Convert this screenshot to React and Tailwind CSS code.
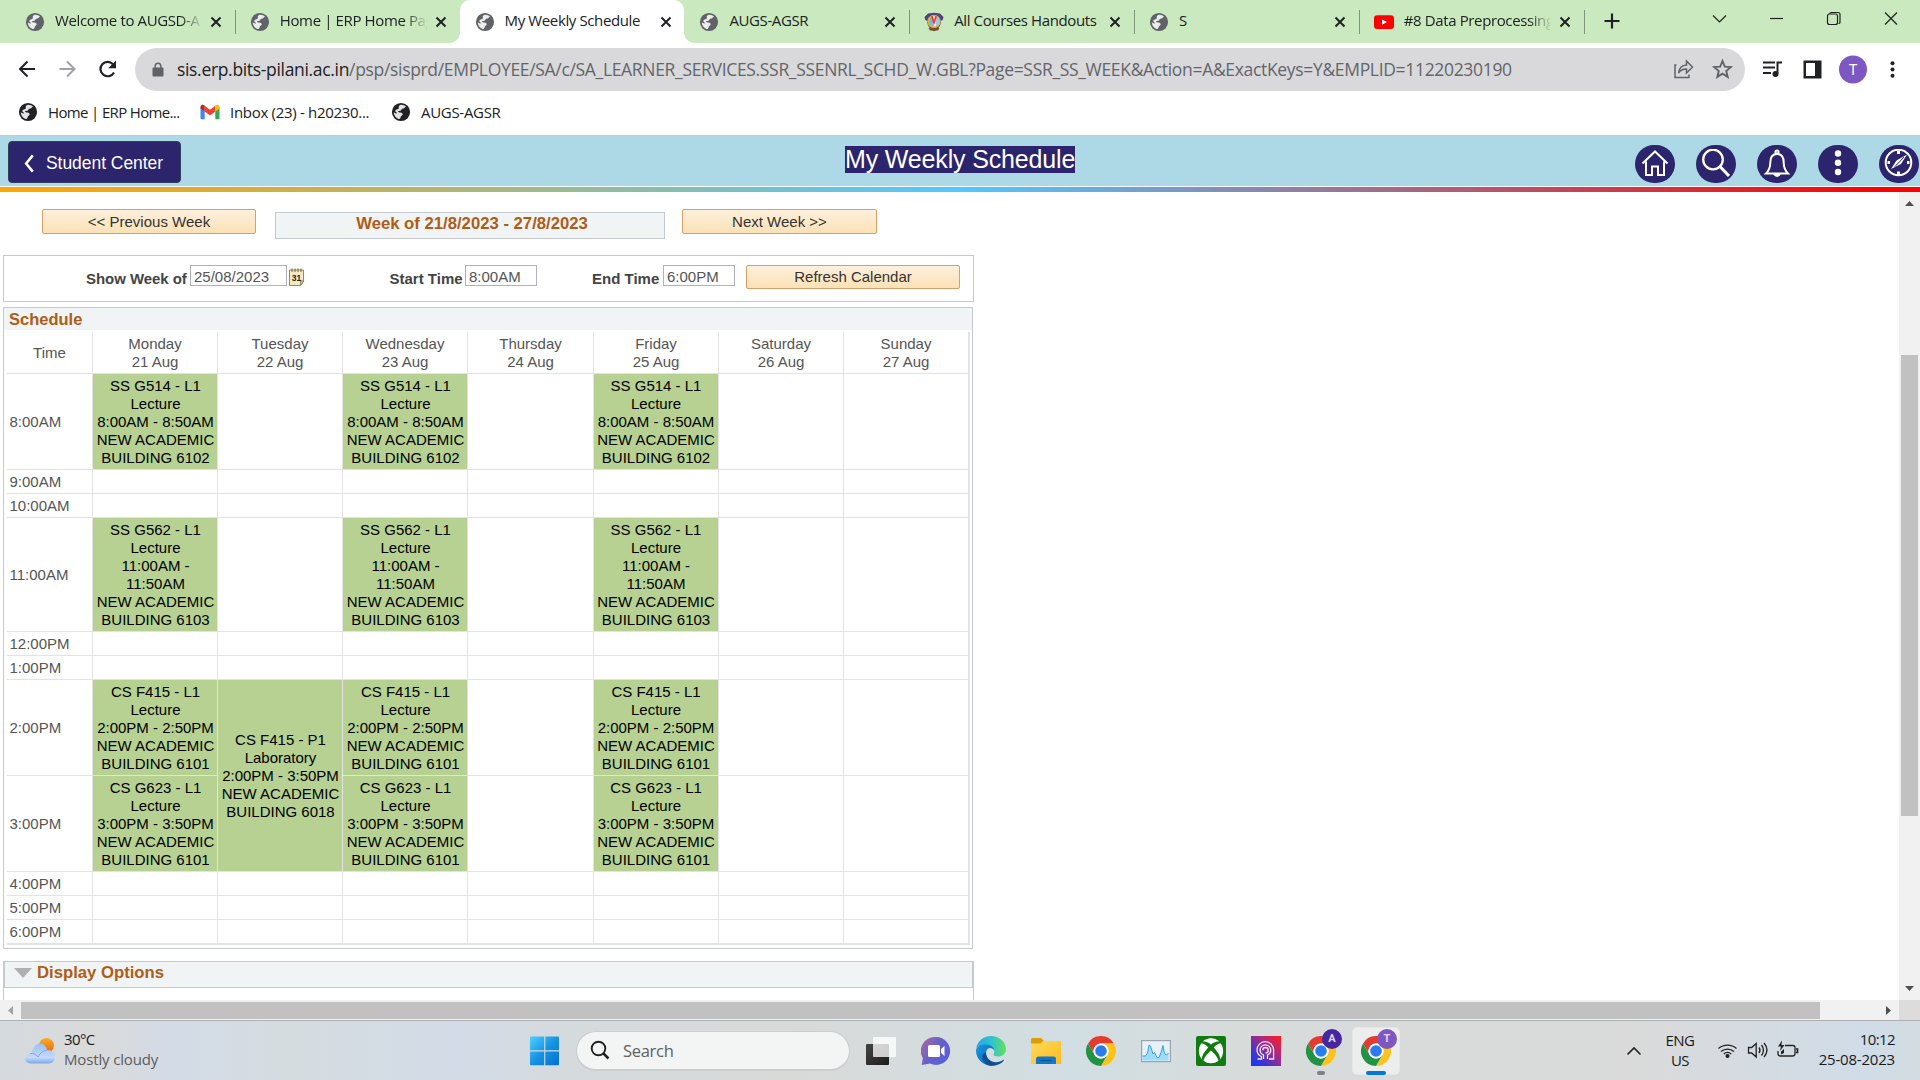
import React from "react";

const UI = "font-['Open_Sans','Noto_Sans',sans-serif]";
const ARIAL = "font-['Liberation_Sans',Arial,sans-serif]";

function Globe({ color = "#5f6368" }) {
  return (
    <svg viewBox="0 0 20 20" className="size-5 shrink-0">
      <circle cx="10" cy="10" r="9.1" fill={color} />
      <path d="M9.300 2.900c2.300-.3 4.300.4 5.700 1.800-.6.5-1.200.7-1.700 1.300-.6.8-1.500.5-2.400.9-1 .5-.4 1.500-1.400 1.900-.8.300-1.700-.1-2.300.5-.5.600.300 1.200 1.300 1.200 1.300 0 2.700.2 3.100 1.300.4 1.200-.5 1.700-1.300 2.200-.8.600-.5 1.800-1.200 2.400-.5.400-1 .6-1.600.6C5 16 2.800 13.500 2.700 10.200c1 .7 2.200 1.300 3.300 1.400.1-.9-.8-1.300-1.400-1.900-.5-.6-.2-1.700.5-2 .9-.4 2-.2 2.600-1.100.4-.7-.2-1.400.1-2.200.2-.7.700-1.300 1.500-1.500z" fill="#fff" fillOpacity=".88" />
    </svg>
  );
}

function Crest() {
  return (
    <svg viewBox="0 0 20 20" className="size-5 shrink-0">
      <path d="M.5 5 4 1.500 10 .8l6 .7L19.500 5l-.8 3-1.700.8C17 14 14 17.500 10 19.200 6 17.500 3.500 14 3 8.800L1.300 8z" fill="#4a4380" />
      <circle cx="10" cy="9.500" r="6.800" fill="#d8aa2c" />
      <circle cx="10" cy="9.300" r="5.300" fill="#f7efe0" />
      <path d="M4.900 9a5 5 0 0 1 3-4.400L10 14.500 8 14a5 5 0 0 1-3.100-5z" fill="#7fb5dd" />
      <path d="M12 4.500a5 5 0 0 1 0 9.800z" fill="#9cc9dc" />
      <path d="m7 4.500 3 8.500 3-8.500-1.800-.4L10 8.500 8.800 4.100z" fill="#e5352b" />
      <path d="M4.500 16h11L14 18.500H6z" fill="#7d4f28" />
    </svg>
  );
}

function YouTube() {
  return (
    <svg viewBox="0 0 20 20" className="size-5 shrink-0">
      <rect x="0" y="3.300" width="20" height="13.600" rx="3" fill="#f00" />
      <path d="m8 7.400 5 2.700-5 2.700z" fill="#fff" />
    </svg>
  );
}

function Gmail() {
  return (
    <svg viewBox="0 0 20 16" className="h-4 w-5 shrink-0">
      <path d="M.5 3v11.200c0 .6.500 1 1 1h3.200V7.300z" fill="#4285f4" />
      <path d="M19.500 3v11.200c0 .6-.5 1-1 1h-3.200V7.300z" fill="#34a853" />
      <path d="M4.700 7.600V1.700L10 5.700l5.300-4v5.900L10 11.600z" fill="#ea4335" />
      <path d="M.5 3C.5 1 2.800.1 4.300 1.300l.4.400v5.900L.5 4.500z" fill="#c5221f" />
      <path d="M19.500 3c0-2-2.300-2.900-3.800-1.700l-.4.400v5.900l4.200-3.100z" fill="#fbbc04" />
    </svg>
  );
}

function Cross() {
  return (
    <svg viewBox="0 0 12 12" className="size-3 shrink-0">
      <path d="m1.500 1.500 9 9m0-9-9 9" stroke="#202124" strokeWidth="2" />
    </svg>
  );
}

const tabs = [
  { title: "Welcome to AUGSD-A", icon: "globe", sep: true, fade: true },
  { title: "Home | ERP Home Pag", icon: "globe", fade: true },
  { title: "My Weekly Schedule", icon: "globe", active: true },
  { title: "AUGS-AGSR", icon: "globe", sep: true },
  { title: "All Courses Handouts", icon: "crest", sep: true },
  { title: "S", icon: "globe", sep: true },
  { title: "#8 Data Preprocessing", icon: "yt", sep: true, fade: true },
];

function Tab({ t }) {
  return (
    <div className={"relative flex h-[43px] w-[224.8px] shrink-0 items-center pl-[15px] " + (t.active ? "rounded-t-[10px] bg-white" : "")}>
      {t.icon === "globe" ? <Globe /> : t.icon === "crest" ? <Crest /> : <YouTube />}
      <span
        className={
          "mb-[3px] ml-[10px] w-[147px] overflow-hidden whitespace-nowrap text-[15px] leading-[22px] tracking-[-0.38px] text-[#202124] " +
          (t.fade ? "[mask-image:linear-gradient(to_right,#000_125px,transparent_148px)]" : "")
        }
      >
        {t.title}
      </span>
      <span className="ml-[8px] flex"><Cross /></span>
      {t.sep && <span className="absolute right-[-1px] top-[10px] h-[24px] w-px bg-[#7f957a]" />}
      {t.active && (
        <>
          <span className="absolute bottom-0 left-[-10px] size-[10px] bg-[radial-gradient(circle_at_0_0,transparent_9.500px,#fff_10px)]" />
          <span className="absolute bottom-0 right-[-10px] size-[10px] bg-[radial-gradient(circle_at_100%_0,transparent_9.500px,#fff_10px)]" />
        </>
      )}
    </div>
  );
}

function TabBar() {
  return (
    <div className="flex h-[43px] shrink-0 bg-[#cae9be] pl-[10px]">
      {tabs.map((t) => <Tab key={t.title} t={t} />)}
      <svg viewBox="0 0 16 16" className="ml-[20px] mt-[13px] size-4"><path d="M8 .5v15M.5 8h15" stroke="#202124" strokeWidth="2.200" /></svg>
      <svg viewBox="0 0 220 43" className="ml-auto h-[43px] w-[220px]" fill="none" stroke="#222" strokeWidth="1.200">
        <path d="m13 15.500 6.500 6.500 6.500-6.500" />
        <path d="M70 18.500h13" />
        <rect x="127.500" y="14" width="10" height="10.500" rx="2" />
        <path d="M130 14v-.5q0-1 1-1h7q2 0 2 2v8q0 1-1.500 1" />
        <path d="m185 12.500 12 12m0-12-12 12" />
      </svg>
    </div>
  );
}

function Toolbar() {
  return (
    <div className="flex h-[53px] shrink-0 items-center bg-white">
      <svg viewBox="0 0 120 48" className="mb-[2px] h-12 w-[120px] shrink-0" fill="none" strokeWidth="2">
        <path d="M35 24H20.500m7-7.500L20 24l7.500 7.500" stroke="#202124" />
        <path d="M59.500 24H74m-7-7.500 7.500 7.500-7.500 7.500" stroke="#a0a2a5" />
        <path d="M114 27.500a7.200 7.200 0 1 1-1-8.300" stroke="#202124" strokeWidth="2.200" />
        <path d="M116 15.500v7.800h-7.800z" fill="#202124" />
      </svg>
      <div className="ml-[15px] flex h-[43px] w-[1610px] shrink-0 items-center rounded-full bg-[#d9d9db] pl-[17px]">
        <svg viewBox="0 0 12 16" className="h-4 w-3 shrink-0">
          <path d="M1.500 5.500h9q1 0 1 1v7q0 1-1 1h-9q-1 0-1-1v-7q0-1 1-1z" fill="#5f6368" />
          <path d="M3.200 6V4a2.800 2.800 0 0 1 5.600 0v2" fill="none" stroke="#5f6368" strokeWidth="1.500" />
        </svg>
        <span className="mb-[2px] ml-[13px] whitespace-nowrap text-[17.500px] leading-[24px] tracking-[-0.325px] text-[#63656a]">
          <span className="text-[#202124]">sis.erp.bits-pilani.ac.in</span>/psp/sisprd/EMPLOYEE/SA/c/SA_LEARNER_SERVICES.SSR_SSENRL_SCHD_W.GBL?Page=SSR_SS_WEEK&amp;Action=A&amp;ExactKeys=Y&amp;EMPLID=11220230190
        </span>
        <svg viewBox="0 0 70 24" className="mb-[2px] ml-auto mr-[5px] h-6 w-[70px] shrink-0" fill="none" stroke="#5f6368" strokeWidth="1.500">
          <path d="M6.500 8H5v12.500h14v-3" />
          <path d="M8.500 16c.7-5 3.500-7.700 8-8V4l6 6-6 6v-4c-3.500 0-6 1.200-8 4z" />
          <path d="m52.500 4 2.300 5.600 6 .5-4.600 3.900 1.500 5.900-5.200-3.200-5.200 3.200 1.500-5.900-4.600-3.900 6-.5z" strokeWidth="1.900" />
        </svg>
      </div>
      <svg viewBox="0 0 160 48" className="mb-[2px] ml-[15px] h-12 w-[160px] shrink-0">
        <path d="M3 17.500h12M3 22.500h12M3 28h8" stroke="#202124" strokeWidth="2" />
        <path d="M22 17.500h-4.500v11" fill="none" stroke="#202124" strokeWidth="2" />
        <circle cx="15.500" cy="29" r="3" fill="#202124" />
        <path d="M43.500 15.500h18v18h-18z" fill="#202124" />
        <path d="M46 18h9v13h-9z" fill="#fff" />
        <circle cx="93" cy="24.500" r="14" fill="#7e57c2" />
        <text x="93" y="29.700" textAnchor="middle" fontSize="14.500" fill="#fff" fontFamily="Roboto">T</text>
        <g fill="#202124"><circle cx="132.500" cy="18.300" r="2" /><circle cx="132.500" cy="24.500" r="2" /><circle cx="132.500" cy="30.700" r="2" /></g>
      </svg>
    </div>
  );
}

function Bookmarks() {
  return (
    <div className="flex h-[40px] shrink-0 items-center border-b border-[#c8cacc] bg-white pb-[7px] text-[15px] tracking-[-0.3px] text-[#202124]">
      <div className="flex w-[182px] items-center gap-[10px] pl-[18px]"><Globe color="#202124" /><span className="whitespace-nowrap tracking-[-0.65px]">Home | ERP Home...</span></div>
      <div className="flex w-[190px] items-center gap-[10px] pl-[18px]"><Gmail /><span className="whitespace-nowrap">Inbox (23) - h20230...</span></div>
      <div className="flex items-center gap-[10px] pl-[19px]"><Globe color="#202124" /><span>AUGS-AGSR</span></div>
    </div>
  );
}

function RoundIcon({ children }) {
  return (
    <span className="flex h-[38px] w-[40px] items-center justify-center rounded-full bg-[#2c246c]">
      <svg viewBox="0 0 30 30" className="size-[30px]" fill="none" stroke="#fff" strokeWidth="2">{children}</svg>
    </span>
  );
}

function PageHeader() {
  return (
    <>
      <div className={"grid h-[50px] shrink-0 grid-cols-[835px_250px_1fr] bg-[#add8e6] " + ARIAL}>
        <div className="flex pl-2 pt-[5px]">
          <div className="flex h-[42px] w-[173px] items-center rounded-[4px] border border-[#2f3f5c] bg-[#2c246c] pl-[14px] pt-[2px] text-[17.500px] text-white">
            <svg viewBox="0 0 12 20" className="mr-[11px] h-[19px] w-3 shrink-0"><path d="M10 1.500 3 10l7 8.500" fill="none" stroke="#fff" strokeWidth="2.700" /></svg>
            <span className="whitespace-nowrap tracking-[-0.05px]">Student Center</span>
          </div>
        </div>
        <div className="flex justify-center pt-[10px]">
          <h1 className="h-[27px] w-[230px] whitespace-nowrap bg-[#2c246c] text-center text-[25px] leading-[26px] tracking-[-0.15px] text-white">My Weekly Schedule</h1>
        </div>
        <div className="flex justify-end gap-[21px] pr-[1px] pt-[9px]">
          <RoundIcon><path d="M2.500 14.500 15 2.500l12.500 12M6 12.500V26h6v-8.500h6V26h6V12.500" /></RoundIcon>
          <RoundIcon><circle cx="12" cy="10.500" r="9.800" strokeWidth="2.300" /><path d="m19 17.500 9 9.500" strokeWidth="3" /></RoundIcon>
          <RoundIcon><path d="M4 24.500h22c-3.500-3.500-4.300-6-4.300-11 0-5.500-2.500-8.500-6.700-8.500s-6.700 3-6.700 8.500c0 5-.8 7.500-4.300 11z" /><path d="M12 25q3 4 6 0" fill="#fff" /><circle cx="15" cy="3" r="1.600" /></RoundIcon>
          <RoundIcon><g fill="#fff" stroke="none"><circle cx="15" cy="4.500" r="3.200" /><circle cx="15" cy="13.800" r="3.200" /><circle cx="15" cy="23" r="3.200" /></g></RoundIcon>
          <RoundIcon><circle cx="14.500" cy="13.500" r="12.800" /><path d="m7 20 5.500-8.500L23 5.500l-6 9.500z" fill="#fff" stroke="none" /><path d="M11 17.500 20 8" stroke="#2c246c" strokeWidth="1" /><path d="M14.500 2v3M14.500 22.500v3M3.500 13.500h2.500M23 13.500h2.500" strokeWidth="3" /></RoundIcon>
        </div>
      </div>
      <div className="h-px shrink-0 bg-[#f4f8fa]" />
      <div className="h-[5px] shrink-0 bg-[linear-gradient(to_right,#ffa500_0px,#ffa500_20px,#50c8ff_960px,#ff0000_1890px)]" />
    </>
  );
}

function PeachButton({ className, children }) {
  return (
    <button className={"flex items-center justify-center whitespace-nowrap rounded-[2px] border border-[#d8a067] bg-gradient-to-b from-[#fdf0dc] to-[#fbe1b6] text-[15px] text-[#333] " + className}>
      {children}
    </button>
  );
}

function Field({ className, children }) {
  return <span className={"flex h-[21px] items-center border border-[#b0b3b8] bg-white pl-[3px] pt-[2px] text-[15px] leading-[17px] text-[#555] " + className}>{children}</span>;
}

function CalendarIcon() {
  return (
    <svg viewBox="0 0 16 18" className="ml-[2px] mt-[12px] h-[18px] w-4 shrink-0">
      <path d="M.5 2h14v11l-3 4.500H.5z" fill="#f4e8c4" stroke="#9a8758" />
      <path d="m15 13-3.500 4.500V13z" fill="#cdb87d" stroke="#8d7a4b" strokeWidth=".7" />
      <path d="M3 .5V4M6 .5V4M9 .5V4M12 .5V4" stroke="#77694a" />
      <text x="7.600" y="12.500" textAnchor="middle" fontSize="8.500" fontWeight="700" fontFamily="Liberation Sans" fill="#222">31</text>
    </svg>
  );
}

const days = [["Monday", "21 Aug"], ["Tuesday", "22 Aug"], ["Wednesday", "23 Aug"], ["Thursday", "24 Aug"], ["Friday", "25 Aug"], ["Saturday", "26 Aug"], ["Sunday", "27 Aug"]];

const lec = (code, time, room) => [code + " - L1", "Lecture", ...time, "NEW ACADEMIC", "BUILDING " + room];
const rows = [
  { time: "8:00AM", mwf: lec("SS G514", ["8:00AM - 8:50AM"], "6102") },
  { time: "9:00AM" },
  { time: "10:00AM" },
  { time: "11:00AM", mwf: lec("SS G562", ["11:00AM -", "11:50AM"], "6103") },
  { time: "12:00PM" },
  { time: "1:00PM" },
  { time: "2:00PM", mwf: lec("CS F415", ["2:00PM - 2:50PM"], "6101"), tue: ["CS F415 - P1", "Laboratory", "2:00PM - 3:50PM", "NEW ACADEMIC", "BUILDING 6018"] },
  { time: "3:00PM", mwf: lec("CS G623", ["3:00PM - 3:50PM"], "6101"), skipTue: true },
  { time: "4:00PM" },
  { time: "5:00PM" },
  { time: "6:00PM" },
];

function Slot({ lines, span, nudge }) {
  const base = "flex flex-col items-center justify-center border-b border-r border-[#e3e3e3] whitespace-nowrap ";
  return (
    <div className={base + (span ? "row-span-2 " : "") + (nudge ? "pl-px " : "") + (lines ? "bg-[#b6d191] text-black" : "")}>
      {lines && lines.map((l) => <div key={l}>{l}</div>)}
    </div>
  );
}

function Schedule() {
  return (
    <section className="ml-[3px] mt-[5px] h-[642px] w-[970px] border border-[#c5c9d0]">
      <h2 className="h-[22px] bg-[#f0f4f5] pl-[5px] text-[16.500px] font-bold leading-[22px] text-[#b05c17]">Schedule</h2>
      <div className="ml-[3px] mt-[2px] grid w-[963px] grid-cols-[86px_125px_125px_125px_126px_125px_125px_125px] grid-rows-[42px_96px_24px_24px_114px_24px_24px_96px_96px_24px_24px_24px] border-b border-r border-[#e3e3e3] text-[15px] leading-[18px] text-[#555]">
        <div className="flex items-center justify-center border-b border-r border-[#e3e3e3]">Time</div>
        {days.map(([d, n]) => (
          <div key={d} className="flex flex-col items-center justify-center border-b border-r border-[#e3e3e3] pt-px">
            <div>{d}</div>
            <div>{n}</div>
          </div>
        ))}
        {rows.map((r) => (
          <React.Fragment key={r.time}>
            <div className="flex items-center border-b border-r border-[#e3e3e3] pl-[2.500px]">{r.time}</div>
            <Slot lines={r.mwf} nudge />
            {!r.skipTue && <Slot lines={r.tue} span={!!r.tue} nudge />}
            <Slot lines={r.mwf} nudge />
            <Slot />
            <Slot lines={r.mwf} />
            <Slot />
            <Slot />
          </React.Fragment>
        ))}
      </div>
    </section>
  );
}

function Content() {
  return (
    <main className={"h-[808px] flex-1 overflow-hidden bg-white " + ARIAL}>
      <div className="flex items-start pl-[42px] pt-[17px]">
        <PeachButton className="h-[25px] w-[214px] pt-[2px]">&lt;&lt; Previous Week</PeachButton>
        <div className="ml-[19px] mt-[3px] h-[27px] w-[390px] whitespace-nowrap border border-[#c5c9d0] bg-[#f0f4f5] pl-[4px] text-center text-[16.700px] font-bold leading-[22px] text-[#b05c17]">Week of 21/8/2023 - 27/8/2023</div>
        <PeachButton className="ml-[17px] h-[25px] w-[195px] pt-[2px]">Next Week &gt;&gt;</PeachButton>
      </div>
      <div className="ml-[3px] mt-[16px] flex h-[47px] w-[971px] items-start border border-[#c5c9d0] text-[15px]">
        <b className="ml-[82px] mt-[14px] w-[104px] whitespace-nowrap leading-[18px] tracking-[-0.05px] text-[#444]">Show Week of</b>
        <Field className="mt-[9px] w-[97px]">25/08/2023</Field>
        <CalendarIcon />
        <b className="ml-[84.500px] mt-[14px] w-[75.500px] whitespace-nowrap leading-[18px] text-[#444]">Start Time</b>
        <Field className="mt-[9px] w-[72px]">8:00AM</Field>
        <b className="ml-[55px] mt-[14px] w-[71px] whitespace-nowrap leading-[18px] text-[#444]">End Time</b>
        <Field className="mt-[9px] w-[72px]">6:00PM</Field>
        <PeachButton className="ml-[11px] mt-[9px] h-[24px] w-[214px]">Refresh Calendar</PeachButton>
      </div>
      <Schedule />
      <section className="ml-[3px] mt-[12px] h-[60px] w-[971px] border border-[#c5c9d0]">
        <h2 className="flex h-[26px] items-center border-b border-r border-l border-[#c5c9d0] bg-[#f0f4f5] pl-[9px] text-[16.700px] font-bold text-[#b05c17]">
          <svg viewBox="0 0 18 10" className="mr-[5px] mb-[3px] h-[10px] w-[18px]"><path d="M0 0h18L9 10z" fill="#aeb0b2" /></svg>
          <span className="mb-[3px]">Display Options</span>
        </h2>
      </section>
    </main>
  );
}

function Chrome() {
  return (
    <svg viewBox="0 0 48 48" className="size-[30px]">
      <circle cx="24" cy="24" r="24" fill="#fff" />
      <path d="M3.200 12A24 24 0 0 1 44.800 12H24a12 12 0 0 0-10.400 18z" fill="#e33b2e" />
      <path d="M44.800 12A24 24 0 0 1 24 48l10.400-18A12 12 0 0 0 24 12z" fill="#fcc31e" />
      <path d="M24 48A24 24 0 0 1 3.200 12l10.400 18a12 12 0 0 0 20.800 0z" fill="#229342" />
      <circle cx="24" cy="24" r="12" fill="#fff" />
      <circle cx="24" cy="24" r="9.300" fill="#2a7bf0" />
    </svg>
  );
}

function Badge({ letter, color }) {
  return <span className={"absolute left-[16px] top-[-7px] flex size-[20px] items-center justify-center rounded-full font-['Roboto',sans-serif] text-[11px] font-bold text-[#e0d8f2] " + color}>{letter}</span>;
}

function TaskApps() {
  return (
    <div className="ml-[16px] flex items-center gap-[25px]">
      <svg viewBox="0 0 30 30" className="size-[30px]">
        <defs><linearGradient id="tv" x2="1" y2="1"><stop stopColor="#444" /><stop offset="1" stopColor="#1d1d1d" /></linearGradient></defs>
        <rect x="0" y="8" width="23" height="21" rx="1" fill="url(#tv)" />
        <rect x="7" y="1" width="23" height="20" rx="1" fill="#fff" fillOpacity=".78" />
      </svg>
      <svg viewBox="0 0 30 30" className="size-[30px]">
        <defs><linearGradient id="tm" x1=".1" y1=".2" x2=".9" y2=".7"><stop stopColor="#9a67ad" /><stop offset=".5" stopColor="#6660c8" /><stop offset="1" stopColor="#5a5fd6" /></linearGradient></defs>
        <path d="M15 1a14 14 0 1 1-6 26.600L.8 29l1-7A14 14 0 0 1 15 1z" fill="url(#tm)" />
        <rect x="7" y="9" width="12" height="12" rx="1.500" fill="#fff" />
        <path d="m20 13 3.500-3v10L20 17z" fill="#fff" />
      </svg>
      <svg viewBox="0 0 30 30" className="size-[30px]">
        <defs>
          <linearGradient id="e1" x2="1"><stop stopColor="#2aa5e8" /><stop offset=".5" stopColor="#2cc3d2" /><stop offset="1" stopColor="#66e05a" /></linearGradient>
          <linearGradient id="e2" x2="1" y2="1"><stop stopColor="#1c95e0" /><stop offset="1" stopColor="#0a62b5" /></linearGradient>
        </defs>
        <path d="M.3 12C1.500 5 7.500 0 15 0c8.300 0 15 6 15 13 0 5-3.700 7.500-7.500 7.500-3 0-5-1-5-2 0-.8 1-1.300 1-3.500 0-3-3-5.500-7-5.500C7 9.500 2.500 10 .3 12z" fill="url(#e1)" />
        <path d="M0 15C0 11 4 8.500 9.500 8.500c5 0 9 2.500 9 6.500-1-2.500-3.500-3.500-5-3-2.500.8-3.500 3-3.500 5.500 0 5 3.500 9 8 11.800A15 15 0 0 1 0 15z" fill="url(#e2)" />
        <path d="M10 16.500c0 6 5 9.700 10 9.700 3 0 5.500-1 7-2.200.7-.4 1.200.1.700.8C25 28 20.500 30 15.500 30c-6-1-10-6-9-10.500.4-1.500 1.800-2.700 3.500-3z" fill="#114f93" />
      </svg>
      <svg viewBox="0 0 30 30" className="size-[30px]">
        <path d="M0 3.500Q0 2 1.500 2H10l3 3v4H0z" fill="#dd9a09" />
        <defs><linearGradient id="fo" x2="1" y2="1"><stop stopColor="#ffdb5c" /><stop offset="1" stopColor="#fdbb1b" /></linearGradient></defs>
        <path d="M0 7.500h9.500l2.500-2.500h18v23H0z" fill="url(#fo)" />
        <path d="M5 28v-5q0-2.500 2.500-2.500h15Q25 20.500 25 23v5z" fill="#0f78cb" />
        <path d="M9.500 24.500h11" stroke="#07518f" strokeWidth="1.200" />
      </svg>
      <Chrome />
      <svg viewBox="0 0 30 30" className="size-[30px]">
        <rect x=".6" y="4.600" width="28.800" height="21" fill="#e8f1f8" stroke="#98a3ad" strokeWidth="1.200" />
        <path d="M1.500 20h3l2-3 1.500-8 1.500 1 2.500 8 1.500-1.500 2.500 5h2l2-5 2-7 1.500 8 2 1.500 2-2V24.500h-26z" fill="#9ddcfb" />
        <path d="M1.500 20h3l2-3 1.500-8 1.500 1 2.500 8 1.500-1.500 2.500 5h2l2-5 2-7 1.500 8 2 1.500 2-2" fill="none" stroke="#35a0dc" />
      </svg>
      <svg viewBox="0 0 30 30" className="size-[30px]">
        <rect width="30" height="30" rx="2" fill="#107c10" />
        <circle cx="15" cy="15" r="12.200" fill="#fff" />
        <path d="M6.500 5.700C10 4.500 13 6.800 15 8.200c2-1.400 5-3.700 8.500-2.500C21.500 3.500 18 2.300 15 2.300S8.500 3.500 6.500 5.700z" fill="#fff" />
        <path d="M6 6c3-1.500 6.500.5 9 2.400C17.500 6.500 21 4.500 24 6l1 1.200c-2.500-.4-5.500 2.300-7.300 4.200 4 4.300 6.800 8.600 6.300 12.100l-1.500 1.500c-.5-3.500-4-7.500-7.500-10.500-3.500 3-7 7-7.500 10.500L6 23.500c-.5-3.500 2.300-7.800 6.300-12.100C10.500 9.500 7.500 6.800 5 7.200z" fill="#107c10" />
      </svg>
      <svg viewBox="0 0 30 30" className="size-[30px]">
        <defs><linearGradient id="hw" x1="0" y1="1" x2="1" y2="0"><stop stopColor="#1238ff" /><stop offset=".25" stopColor="#3a35d8" /><stop offset=".6" stopColor="#a52a86" /><stop offset="1" stopColor="#ff1d1d" /></linearGradient></defs>
        <rect width="30" height="30" fill="url(#hw)" />
        <g fill="none" stroke="#f3e8f6" strokeWidth="1.300">
          <path d="M6.500 23h4v-2.500C8 19.500 6 17 6 14a8.300 8.300 0 0 1 16.600 0v9H18" />
          <path d="M12.500 23v-4C10.500 18 9 16.500 9 14.200a5.400 5.400 0 0 1 10.800 0c0 2.200-1.300 3.800-3.300 4.800v4" />
          <path d="M11.800 14.200a2.700 2.700 0 1 1 2.700 2.700" />
        </g>
      </svg>
      <span className="relative flex">
        <Chrome />
        <Badge letter="A" color="bg-[#4527a0]" />
        <span className="absolute left-[11px] top-[35px] h-1 w-2 rounded-full bg-[#7d7f80]" />
      </span>
      <span className="relative -ml-[9px] flex h-12 w-12 rounded-[5px] border border-[#e6e6e6] bg-[#eceeee] pl-2 pt-[8px]">
        <span className="relative flex h-[30px]"><Chrome /><Badge letter="T" color="bg-[#7e57c2]" /></span>
        <span className="absolute left-[13px] top-[43px] h-1 w-5 rounded-full bg-[#0078d4]" />
      </span>
    </div>
  );
}

function Taskbar() {
  return (
    <footer className="flex h-[60px] shrink-0 items-center border-t border-[#aeb1b4] bg-[linear-gradient(90deg,#d5dadf_0%,#dadada_5%,#d3dbe7_9%,#d5dce0_15%,#d2dbe7_24%,#d5dade_29%,#d8dad8_41%,#d1dee3_56%,#d7dbda_65%,#dadada_85%,#d0dce8_97%,#d3dce1_100%)] text-[15px] leading-[20px] text-[#1b1b1b]">
      <div className="flex w-[530px] shrink-0 items-center pl-[25px]">
        <svg viewBox="0 0 30 26" className="h-[26px] w-[30px]">
          <defs>
            <linearGradient id="sun" y2="1" x2="0"><stop stopColor="#f6b027" /><stop offset="1" stopColor="#f0620e" /></linearGradient>
            <linearGradient id="cl" y2="1" x2="0"><stop stopColor="#9dbdf1" /><stop offset=".7" stopColor="#c4dafb" /><stop offset="1" stopColor="#7ca6ea" /></linearGradient>
          </defs>
          <circle cx="21.500" cy="7.500" r="7.500" fill="url(#sun)" />
          <path d="M6 25.500c-8 0-7.500-9 .5-10C8 8 12 5.500 15 5.500c4 0 6.500 3 7 6.500 5 0 8 3 8 7 0 4.500-3 6.500-7 6.500z" fill="url(#cl)" />
          <path d="M5 15.500c4-.5 6 1 8 3.500 2-4 5-6.500 9-7" fill="none" stroke="#7fa5e4" strokeWidth="1" />
        </svg>
        <div className="mb-[4px] ml-[9px]">
          <div className="tracking-[-0.6px]">30°C</div>
          <div className="whitespace-nowrap tracking-[-0.15px] text-[#5a5c5e]">Mostly cloudy</div>
        </div>
      </div>
      <svg viewBox="0 0 30 30" className="size-[30px] shrink-0">
        <defs><linearGradient id="win" x2="1" y2="1"><stop stopColor="#4ccfff" /><stop offset=".5" stopColor="#1793e2" /><stop offset="1" stopColor="#0071d0" /></linearGradient></defs>
        <path d="M1 .5h13.200v13.700H0V1.500q0-1 1-1zM15.300.5H28q1 0 1 1v12.700H15.300zM0 15.500h14.200v13.700H1q-1 0-1-1zM15.300 15.500H29v12.700q0 1-1 1H15.300z" fill="url(#win)" />
      </svg>
      <div className="ml-[16px] flex h-[40px] w-[274px] shrink-0 items-center rounded-full border border-b-2 border-[#c9cdce] bg-[#f3f4f4] pl-[13px] text-[16.500px] text-[#5f6060]">
        <svg viewBox="0 0 20 20" className="mr-[13px] size-5"><circle cx="8.500" cy="8.500" r="6.800" fill="none" stroke="#222" strokeWidth="1.900" /><path d="m13.500 13.500 5 5" stroke="#222" strokeWidth="2.500" /></svg>
        <span className="mt-px tracking-[-0.3px]">Search</span>
      </div>
      <TaskApps />
      <div className="ml-auto flex shrink-0 items-center pr-[25px]">
        <svg viewBox="0 0 16 10" className="h-[10px] w-4"><path d="m1.500 8.500 6.500-6.500 6.500 6.500" fill="none" stroke="#222" strokeWidth="1.600" /></svg>
        <div className="mb-[2px] ml-[21px] w-[34px] text-center leading-[20px] tracking-[-0.5px]"><div>ENG</div><div>US</div></div>
        <svg viewBox="0 0 84 20" className="mb-[2px] ml-[20px] h-5 w-[84px]" fill="none" stroke="#222" strokeWidth="1.300">
          <path d="M1.500 8.500a13.500 13.500 0 0 1 18 0M4 11.500a9.800 9.800 0 0 1 13 0M6.700 14a6 6 0 0 1 7.600 0" />
          <circle cx="10.500" cy="16" r="1.400" fill="#222" />
          <path d="M31.500 7.500h3.200l4.500-4v13.500l-4.500-4h-3.200zM42 7.500q2 2.700 0 5.500M44.500 5q4 5.200 0 10.500M47 3q6 7 0 14" />
          <path d="M68 5.500h8q2 0 2 2v6q0 2.500-2.500 2.500h-12q-2.500 0-2.500-2.500V11" />
          <path d="M79 9h1.500v3.500H79" strokeWidth="1.600" />
          <path d="m65 .5-4 6h3l-1 4.500 4.500-6h-3z" fill="#222" stroke="none" /><path d="M64 14.500v-3l3-2.500v4z" fill="#222" stroke="none" />
        </svg>
        <div className="mb-[4px] ml-[12px] w-[82px] whitespace-nowrap text-right tracking-[-0.2px]"><div className="tracking-[-0.6px]">10:12</div><div>25-08-2023</div></div>
      </div>
    </footer>
  );
}

export default function App() {
  return (
    <div className={"flex h-[1080px] w-[1920px] flex-col overflow-hidden bg-white " + UI}>
      <TabBar />
      <Toolbar />
      <Bookmarks />
      <PageHeader />
      <div className="flex h-[808px] shrink-0">
        <Content />
        <div className="flex w-[21px] flex-col items-center bg-[#f1f1f1]">
          <svg viewBox="0 0 9 5" className="mt-[9px] h-[5px] w-[9px]"><path d="M4.500 0 9 5H0z" fill="#505050" /></svg>
          <div className="mt-[149px] h-[461px] w-[17px] bg-[#c1c1c1]" />
          <svg viewBox="0 0 9 5" className="mb-[9px] mt-auto h-[5px] w-[9px]"><path d="M0 0h9L4.500 5z" fill="#505050" /></svg>
        </div>
      </div>
      <div className="flex h-[20px] shrink-0 items-center bg-[#f1f1f1]">
        <svg viewBox="0 0 5 9" className="ml-[8px] h-[9px] w-[5px]"><path d="M5 0v9L0 4.500z" fill="#a3a3a3" /></svg>
        <div className="ml-[8px] h-[17px] w-[1799px] bg-[#c1c1c1]" />
        <svg viewBox="0 0 5 9" className="ml-[66px] h-[9px] w-[5px]"><path d="M0 0v9l5-4.500z" fill="#505050" /></svg>
        <div className="ml-auto h-[20px] w-[21px] bg-[#dcdcdc]" />
      </div>
      <Taskbar />
    </div>
  );
}
